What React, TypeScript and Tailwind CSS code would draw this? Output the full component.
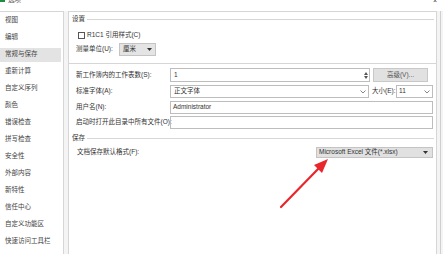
import React from 'react';

const font = { fontFamily: '"Liberation Sans", "Noto Sans CJK SC", sans-serif' };

const navItems = [
  '视图',
  '编辑',
  '常规与保存',
  '重新计算',
  '自定义序列',
  '颜色',
  '错误检查',
  '拼写检查',
  '安全性',
  '外部内容',
  '新特性',
  '信任中心',
  '自定义功能区',
  '快速访问工具栏',
];

const SolidCaret = () => (
  <svg width="5" height="3" viewBox="0 0 5 3" className="flex-shrink-0">
    <polygon points="0,0 5,0 2.5,3" fill="#333" />
  </svg>
);

const Chevron = () => (
  <svg width="6" height="4" viewBox="0 0 6 4" className="flex-shrink-0">
    <polyline points="0.5,0.5 3,3 5.5,0.5" fill="none" stroke="#666" strokeWidth="0.8" />
  </svg>
);

const GroupHeader: React.FC<{ label: string; className?: string }> = ({ label, className }) => (
  <div className={`flex items-center h-[10px] gap-[2px] pr-[2px] ${className ?? ''}`}>
    <span className="text-[6.5px] leading-none text-[#333]">{label}</span>
    <div className="flex-1 h-px bg-[#d6d6d6]"></div>
  </div>
);

const App: React.FC = () => {
  const activeTab = '常规与保存';

  return (
    <div className="relative w-[443px] h-[254px] overflow-hidden bg-[#f4f4f4] flex flex-col" style={font}>
      {/* title bar, cut off at the top */}
      <div className="h-[11px] flex items-start gap-[3px] flex-shrink-0 bg-white">
        <div className="w-[5px] h-[3px] bg-[#1e8e3e] -mt-px"></div>
        <span className="text-[6.5px] leading-none text-[#555] -mt-[3px]">选项</span>
        <span className="ml-auto mr-[6px] text-[7px] leading-none text-[#444] -mt-[3px]">×</span>
      </div>

      <div className="flex flex-1 min-h-0">
        {/* sidebar */}
        <aside className="w-[64px] bg-white border-t border-r border-[#d6d6d6] flex flex-col pt-[1.5px] gap-[3px] flex-shrink-0">
          {navItems.map((item) => (
            <div
              key={item}
              className={`h-[14px] mr-[2px] flex items-center pl-[5px] text-[6.5px] leading-none text-[#444] whitespace-nowrap ${item === activeTab ? 'bg-[#e3e3e3]' : ''}`}
            >
              {item}
            </div>
          ))}
        </aside>

        {/* content */}
        <main className="ml-[4px] w-[369px] bg-white border-t border-l border-r border-[#d6d6d6] flex flex-col pl-[3px] flex-shrink-0 text-[#333]">
          <GroupHeader label="设置" className="mt-[2px]" />

          <div className="mt-[6px] h-[10px] flex items-center pl-[6px] gap-[2px]">
            <div className="w-[7px] h-[7px] border border-[#555] bg-white"></div>
            <span className="text-[6.5px] leading-none">R1C1 引用样式(C)</span>
          </div>

          <div className="mt-[3px] h-[13px] flex items-center pl-[4px]">
            <span className="w-[43px] text-[6.5px] leading-none">测量单位(U):</span>
            <div className="w-[37px] h-full bg-[#e4e4e4] border border-[#c4c4c4] flex items-center pl-[3px] pr-[3px] justify-between">
              <span className="text-[6.5px] leading-none">厘米</span>
              <SolidCaret />
            </div>
          </div>

          <div className="mt-[7px] h-px bg-[#d6d6d6] -ml-[3px]"></div>

          {/* row 1 */}
          <div className="mt-[4px] h-[14px] flex items-center pl-[4px]">
            <span className="w-[94px] text-[6.5px] leading-none whitespace-nowrap">新工作簿内的工作表数(S):</span>
            <div className="w-[200px] h-full border border-[#bdbdbd] flex items-center pl-[3px] pr-[1px]">
              <span className="text-[6.5px] leading-none flex-1">1</span>
              <div className="w-[5px] h-[10px] flex flex-col items-center justify-center gap-[1px]">
                <svg width="4" height="3" viewBox="0 0 4 3"><polygon points="0,3 4,3 2,0" fill="#555" /></svg>
                <svg width="4" height="3" viewBox="0 0 4 3"><polygon points="0,0 4,0 2,3" fill="#555" /></svg>
              </div>
            </div>
            <div className="ml-[3px] w-[55px] h-full bg-[#e1e1e1] border border-[#c8c8c8] flex items-center justify-center">
              <span className="text-[6.5px] leading-none text-[#555]">高级(V)...</span>
            </div>
          </div>

          {/* row 2 */}
          <div className="mt-[3px] h-[13px] flex items-center pl-[4px]">
            <span className="w-[94px] text-[6.5px] leading-none">标准字体(A):</span>
            <div className="w-[199px] h-full border border-[#bdbdbd] flex items-center pl-[3px] pr-[2px] justify-between">
              <span className="text-[6.5px] leading-none">正文字体</span>
              <Chevron />
            </div>
            <span className="w-[27px] pl-[3px] text-[6.5px] leading-none whitespace-nowrap">大小(E):</span>
            <div className="w-[37px] h-full border border-[#bdbdbd] flex items-center pl-[2px] pr-[2px] justify-between">
              <span className="text-[6.5px] leading-none">11</span>
              <Chevron />
            </div>
          </div>

          {/* row 3 */}
          <div className="mt-[3px] h-[13px] flex items-center pl-[4px]">
            <span className="w-[94px] text-[6.5px] leading-none">用户名(N):</span>
            <div className="w-[263px] h-full border border-[#bdbdbd] flex items-center pl-[2px]">
              <span className="text-[6.5px] leading-none">Administrator</span>
            </div>
          </div>

          {/* row 4 */}
          <div className="mt-[2px] h-[13px] flex items-center pl-[4px]">
            <span className="w-[94px] text-[6.5px] leading-none whitespace-nowrap">启动时打开此目录中所有文件(O):</span>
            <div className="w-[263px] h-full border border-[#bdbdbd]"></div>
          </div>

          <GroupHeader label="保存" className="mt-[4px]" />

          <div className="mt-[4px] h-[11px] flex items-center pl-[5px] pr-[3px]">
            <span className="flex-1 text-[6.5px] leading-none">文档保存默认格式(F):</span>
            <div className="w-[117px] h-full bg-[#e1e1e1] border border-[#c4c4c4] flex items-center pl-[2px] pr-[4px] justify-between">
              <span className="text-[6.5px] leading-none whitespace-nowrap">Microsoft Excel 文件(*.xlsx)</span>
              <SolidCaret />
            </div>
          </div>
        </main>

        <div className="ml-[3px] w-px bg-[#cfcfcf]"></div>
      </div>

      {/* red annotation arrow */}
      <svg className="absolute left-0 top-0 pointer-events-none" width="443" height="254" viewBox="0 0 443 254">
        <line x1="281" y1="207" x2="320" y2="167" stroke="#e8262b" strokeWidth="2.2" strokeLinecap="round" />
        <polygon points="328,159 322,173 314,165" fill="#e8262b" />
      </svg>
    </div>
  );
};

export default App;
